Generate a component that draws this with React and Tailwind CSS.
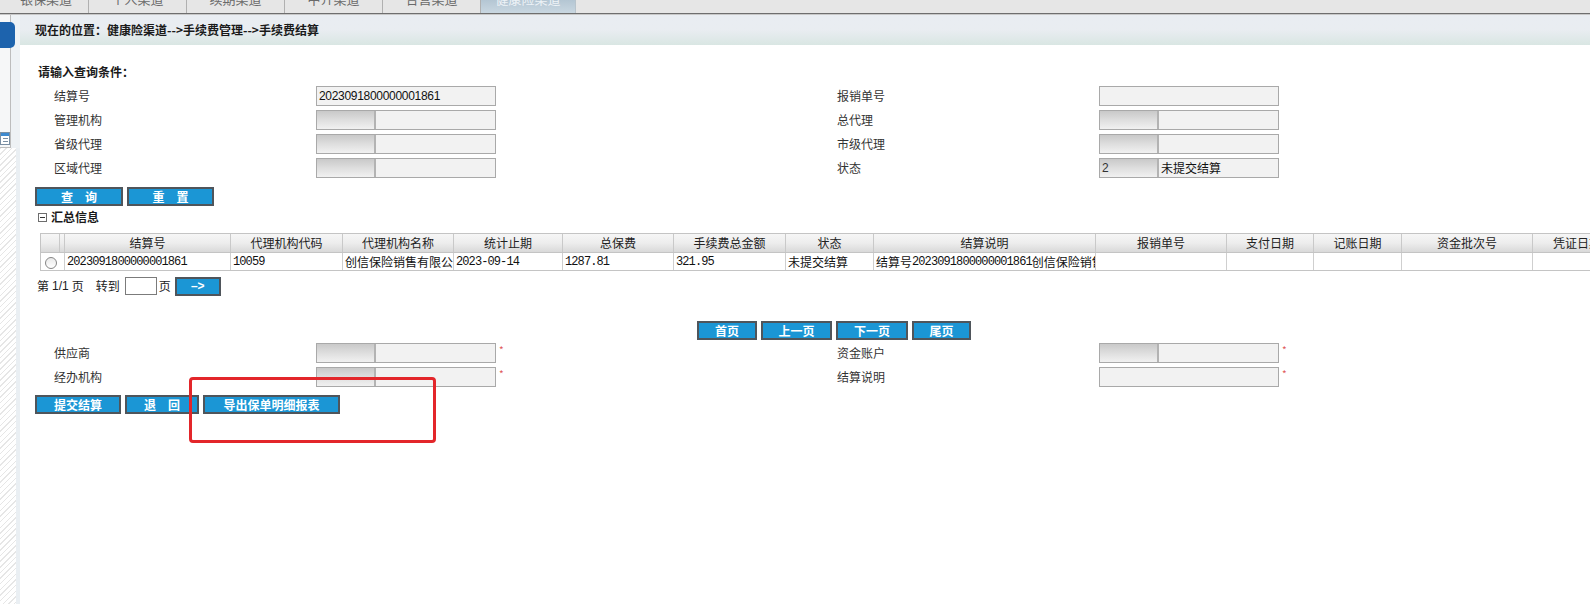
import React from "react";

function Btn({ children, className = "" }) {
  return (
    <div
      className={`h-[19px] flex items-center justify-center bg-[#1b96d5] border-2 border-[#4f555b] text-white font-bold text-[12px] leading-none ${className}`}
    >
      {children}
    </div>
  );
}

function Plain({ value }) {
  return (
    <div className="w-[180px] h-[20px] border border-[#a9a9a9] bg-[#f2f2f2] flex items-center pl-[2px] font-['Liberation_Sans',sans-serif] tracking-[-0.3px] text-[12px] text-[#111] leading-none">
      {value}
    </div>
  );
}

function Combo({ code, name }) {
  return (
    <div className="w-[180px] h-[20px] border border-[#a9a9a9] bg-[#f2f2f2] flex">
      <div className="w-[59px] h-full border-r-2 border-[#b3b3b3] bg-linear-to-b from-[#c9c9c9] via-[#dedede] to-[#f1f1f1] flex items-center pl-[2px] text-[12px] font-['Liberation_Sans',sans-serif] leading-none">
        {code}
      </div>
      <div className="flex-1 flex items-center pl-[2px] text-[12px] leading-none text-[#111]">
        {name}
      </div>
    </div>
  );
}

function Star() {
  return <span className="ml-[3px] -mt-[6px] text-[10px] leading-none text-[#e05a5a]">*</span>;
}

function FormRow({ l1, f1, l2, f2, star }) {
  return (
    <div className="ml-[18px] h-[24px] grid grid-cols-[278px_521px_262px_300px] items-center text-[12px] text-[#333]">
      <div className="pl-[16px] leading-none">{l1}</div>
      <div className="flex items-center">
        {f1}
        {star && <Star />}
      </div>
      <div className="leading-none">{l2}</div>
      <div className="flex items-center">
        {f2}
        {star && <Star />}
      </div>
    </div>
  );
}

function H({ className = "", children }) {
  return (
    <div
      className={`h-full shrink-0 border-r border-[#c9c9c9] flex items-center justify-center text-[12px] text-[#222] leading-none ${className}`}
    >
      {children}
    </div>
  );
}

function C({ className = "", children, mono }) {
  return (
    <div
      className={`h-full shrink-0 border-r border-[#cfcfcf] flex items-center pl-[2px] whitespace-nowrap overflow-hidden text-[12px] text-[#111] leading-none ${
        mono ? "font-['Liberation_Mono',monospace] tracking-[-0.9px]" : ""
      } ${className}`}
    >
      {children}
    </div>
  );
}

function Mono({ children }) {
  return <span className="font-['Liberation_Mono',monospace] tracking-[-0.9px]">{children}</span>;
}

function TabBar() {
  const tabs = ["个人渠道", "续期渠道", "中介渠道", "合营渠道"];
  return (
    <div>
      <div className="h-[13px] bg-[#e6e6e6] flex overflow-hidden text-[13px] leading-[13px] text-[#6a6a6a]">
        <div className="w-[89px] shrink-0 border-r border-[#b0b0b0] flex justify-center pl-[4px]">
          <span className="-mt-[8px]">银保渠道</span>
        </div>
        {tabs.map((t) => (
          <div key={t} className="w-[98px] shrink-0 border-r border-[#b0b0b0] flex justify-center">
            <span className="-mt-[8px]">{t}</span>
          </div>
        ))}
        <div className="w-[95px] shrink-0 border-r border-[#b8c4cc] bg-linear-to-b from-[#b4c6d3] to-[#c9d7e1] flex justify-center text-[#eef3f7]">
          <span className="-mt-[8px]">健康险渠道</span>
        </div>
        <div className="flex-1" />
      </div>
      <div className="h-[1px] bg-[#6e6e6e]" />
      <div className="h-[1px] bg-[#c8c8c8]" />
    </div>
  );
}

function LeftStrip() {
  return (
    <div className="w-[20px] shrink-0 flex flex-col">
      <div className="h-[133px] flex">
        <div className="w-[11px] h-full border-r border-b border-[#bdbdbd] bg-[#f6f7f8] relative">
          <div className="absolute left-0 top-[7px] w-[15px] h-[26px] rounded-r-[5px] bg-[#1d63ad]" />
          <div className="absolute left-0 top-[117px] w-[10px] h-[13px] border border-[#7a8fa3] bg-white">
            <div className="h-[3px] bg-[#3d8ad0]" />
            <div className="mt-[2px] ml-[2px] w-[5px] h-[1px] bg-[#7a8fa3]" />
            <div className="mt-[2px] ml-[2px] w-[5px] h-[1px] bg-[#7a8fa3]" />
          </div>
        </div>
        <div className="flex-1 bg-[#eef2f5]" />
      </div>
      <div className="flex-1 flex">
        <div className="w-[16px] h-full bg-[repeating-linear-gradient(135deg,#e6e6e6_0px,#e6e6e6_1px,#ffffff_1px,#ffffff_4px)]" />
        <div className="flex-1 bg-[#eaeff3]" />
      </div>
    </div>
  );
}

export default function App() {
  return (
    <div className="relative w-[1590px] h-[604px] overflow-hidden bg-white font-['Noto_Sans_CJK_SC',sans-serif] text-[12px] text-[#222]">
      <TabBar />
      <div className="flex h-[589px]">
        <LeftStrip />
        <div className="flex-1 min-w-0 flex flex-col">
          <div className="h-[30px] shrink-0 bg-linear-to-b from-[#e9edf2] via-[#e9edf1] to-[#d9e6e3] flex items-center pl-[15px] font-bold text-[12px] text-[#1a1a1a] leading-none">
            现在的位置：健康险渠道--&gt;手续费管理--&gt;手续费结算
          </div>

          <div className="mt-[19px] ml-[18px] h-[16px] flex items-center font-bold text-[12px] text-[#1a1a1a] leading-none">
            请输入查询条件：
          </div>

          <div className="mt-[4px]">
            <FormRow l1="结算号" f1={<Plain value="2023091800000001861" />} l2="报销单号" f2={<Plain value="" />} />
            <FormRow l1="管理机构" f1={<Combo />} l2="总代理" f2={<Combo />} />
            <FormRow l1="省级代理" f1={<Combo />} l2="市级代理" f2={<Combo />} />
            <FormRow l1="区域代理" f1={<Combo />} l2="状态" f2={<Combo code="2" name="未提交结算" />} />
          </div>

          <div className="mt-[7px] ml-[15px] flex gap-[4px]">
            <Btn className="w-[88px]">查　询</Btn>
            <Btn className="w-[87px]">重　置</Btn>
          </div>

          <div className="mt-[3px] ml-[18px] h-[16px] flex items-center leading-none">
            <svg width="9" height="9" viewBox="0 0 9 9" className="mr-[4px]">
              <rect x="0.5" y="0.5" width="8" height="8" fill="white" stroke="#6d6d6d" />
              <line x1="2" y1="4.5" x2="7" y2="4.5" stroke="#333" />
            </svg>
            <span className="font-bold text-[12px] text-[#1a1a1a]">汇总信息</span>
          </div>

          <div className="mt-[8px] ml-[20px] w-[1612px] border-l border-t border-b border-[#c4c4c4]">
            <div className="h-[19px] flex bg-linear-to-b from-[#f6f6f6] via-[#ededed] to-[#d9d9d9] border-b border-[#c4c4c4]">
              <H className="w-[19px]" />
              <H className="w-[5px]" />
              <H className="w-[166px]">结算号</H>
              <H className="w-[112px]">代理机构代码</H>
              <H className="w-[111px]">代理机构名称</H>
              <H className="w-[109px]">统计止期</H>
              <H className="w-[111px]">总保费</H>
              <H className="w-[112px]">手续费总金额</H>
              <H className="w-[88px]">状态</H>
              <H className="w-[222px]">结算说明</H>
              <H className="w-[131px]">报销单号</H>
              <H className="w-[87px]">支付日期</H>
              <H className="w-[88px]">记账日期</H>
              <H className="w-[131px]">资金批次号</H>
              <H className="w-[120px] justify-start pl-[20px]">凭证日期</H>
            </div>
            <div className="h-[17px] flex bg-white">
              <div className="w-[24px] h-full shrink-0 border-r border-[#cfcfcf] flex items-center pl-[4px]">
                <div className="w-[12px] h-[12px] mt-[3px] rounded-full border border-[#858585] bg-linear-to-b from-[#e9e9e9] to-white" />
              </div>
              <C className="w-[166px]" mono>2023091800000001861</C>
              <C className="w-[112px]" mono>10059</C>
              <C className="w-[111px] pl-[1px]">创信保险销售有限公司</C>
              <C className="w-[109px]" mono>2023-09-14</C>
              <C className="w-[111px]" mono>1287.81</C>
              <C className="w-[112px]" mono>321.95</C>
              <C className="w-[88px]">未提交结算</C>
              <C className="w-[222px]">
                结算号<Mono>2023091800000001861</Mono>创信保险销售有限公司手续费结算
              </C>
              <C className="w-[131px]" />
              <C className="w-[87px]" />
              <C className="w-[88px]" />
              <C className="w-[131px]" />
              <C className="w-[120px]" />
            </div>
          </div>

          <div className="mt-[6px] ml-[17px] h-[18px] flex items-center text-[12px] text-[#222] leading-none">
            <span>第</span>
            <span className="ml-[3px] font-['Liberation_Sans',sans-serif]">1/1</span>
            <span className="ml-[3px]">页</span>
            <span className="ml-[12px]">转到</span>
            <div className="ml-[5px] w-[32px] h-[18px] border border-[#7b7b7b] bg-white" />
            <span className="ml-[2px]">页</span>
            <Btn className="ml-[4px] w-[46px] h-[18px] font-['Liberation_Sans',sans-serif]">–&gt;</Btn>
          </div>

          <div className="mt-[26px] ml-[677px] flex gap-[4px]">
            <Btn className="w-[60px]">首页</Btn>
            <Btn className="w-[71px]">上一页</Btn>
            <Btn className="w-[72px]">下一页</Btn>
            <Btn className="w-[59px]">尾页</Btn>
          </div>

          <div className="mt-[1px]">
            <FormRow l1="供应商" f1={<Combo />} l2="资金账户" f2={<Combo />} star />
            <FormRow l1="经办机构" f1={<Combo />} l2="结算说明" f2={<Plain value="" />} star />
          </div>

          <div className="mt-[6px] ml-[15px] flex gap-[4px]">
            <Btn className="w-[86px]">提交结算</Btn>
            <Btn className="w-[74px]">退　回</Btn>
            <Btn className="w-[137px]">导出保单明细报表</Btn>
          </div>
        </div>
      </div>

      <div className="absolute left-[189px] top-[377px] w-[247px] h-[66px] border-[3px] border-[#e3262a] rounded-[4px]" />
    </div>
  );
}
